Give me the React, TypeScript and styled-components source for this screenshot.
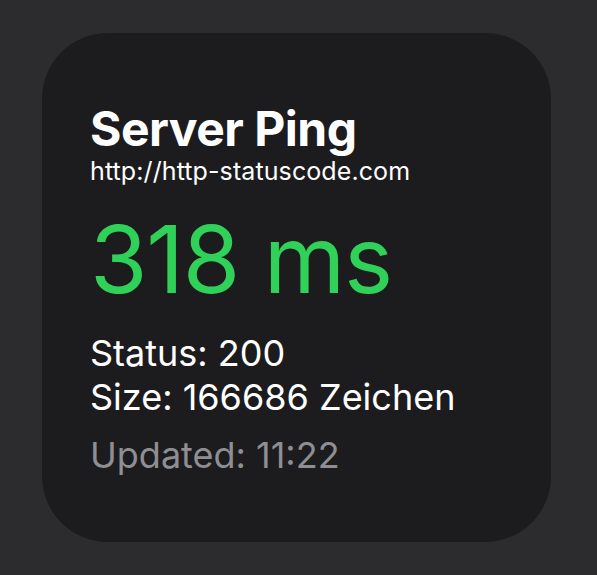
import React from 'react';
import styled, { createGlobalStyle } from 'styled-components';

const GlobalStyle = createGlobalStyle`
  html, body {
    margin: 0;
    padding: 0;
    background: #2c2c2e;
  }
  body {
    font-family: Inter, "Noto Sans", "Liberation Sans", sans-serif;
    -webkit-font-smoothing: antialiased;
  }
`;

const Page = styled.div`
  width: 597px;
  height: 575px;
  padding: 33px 0 0 42px;
  box-sizing: border-box;
`;

const Widget = styled.div`
  width: 509px;
  height: 509px;
  box-sizing: border-box;
  padding: 74px 40px 0 48px;
  background: #1c1c1e;
  border-radius: 66px;
  display: flex;
  flex-direction: column;
`;

const Title = styled.h1`
  margin: 0;
  font-size: 48px;
  line-height: 44px;
  font-weight: 700;
  color: #ffffff;
  letter-spacing: -0.5px;
`;

const Url = styled.div`
  margin-top: 6px;
  font-size: 25px;
  line-height: 28px;
  color: #ffffff;
  letter-spacing: 0.1px;
`;

const Latency = styled.div`
  margin-top: 24px;
  font-size: 93px;
  line-height: 100px;
  font-weight: 400;
  color: #30d158;
  letter-spacing: -1.3px;
`;

const Details = styled.div`
  margin-top: 22px;
  display: flex;
  flex-direction: column;
`;

const Line = styled.div<{ $muted?: boolean }>`
  font-size: 36px;
  line-height: 44px;
  color: ${(p) => (p.$muted ? '#8e8e93' : '#ffffff')};
`;

const Updated = styled(Line)`
  margin-top: 14px;
`;

export default function App() {
  return (
    <>
      <GlobalStyle />
      <Page>
        <Widget>
          <Title>Server Ping</Title>
          <Url>http://http-statuscode.com</Url>
          <Latency>318 ms</Latency>
          <Details>
            <Line>Status: 200</Line>
            <Line>Size: 166686 Zeichen</Line>
          </Details>
          <Updated $muted>Updated: 11:22</Updated>
        </Widget>
      </Page>
    </>
  );
}
